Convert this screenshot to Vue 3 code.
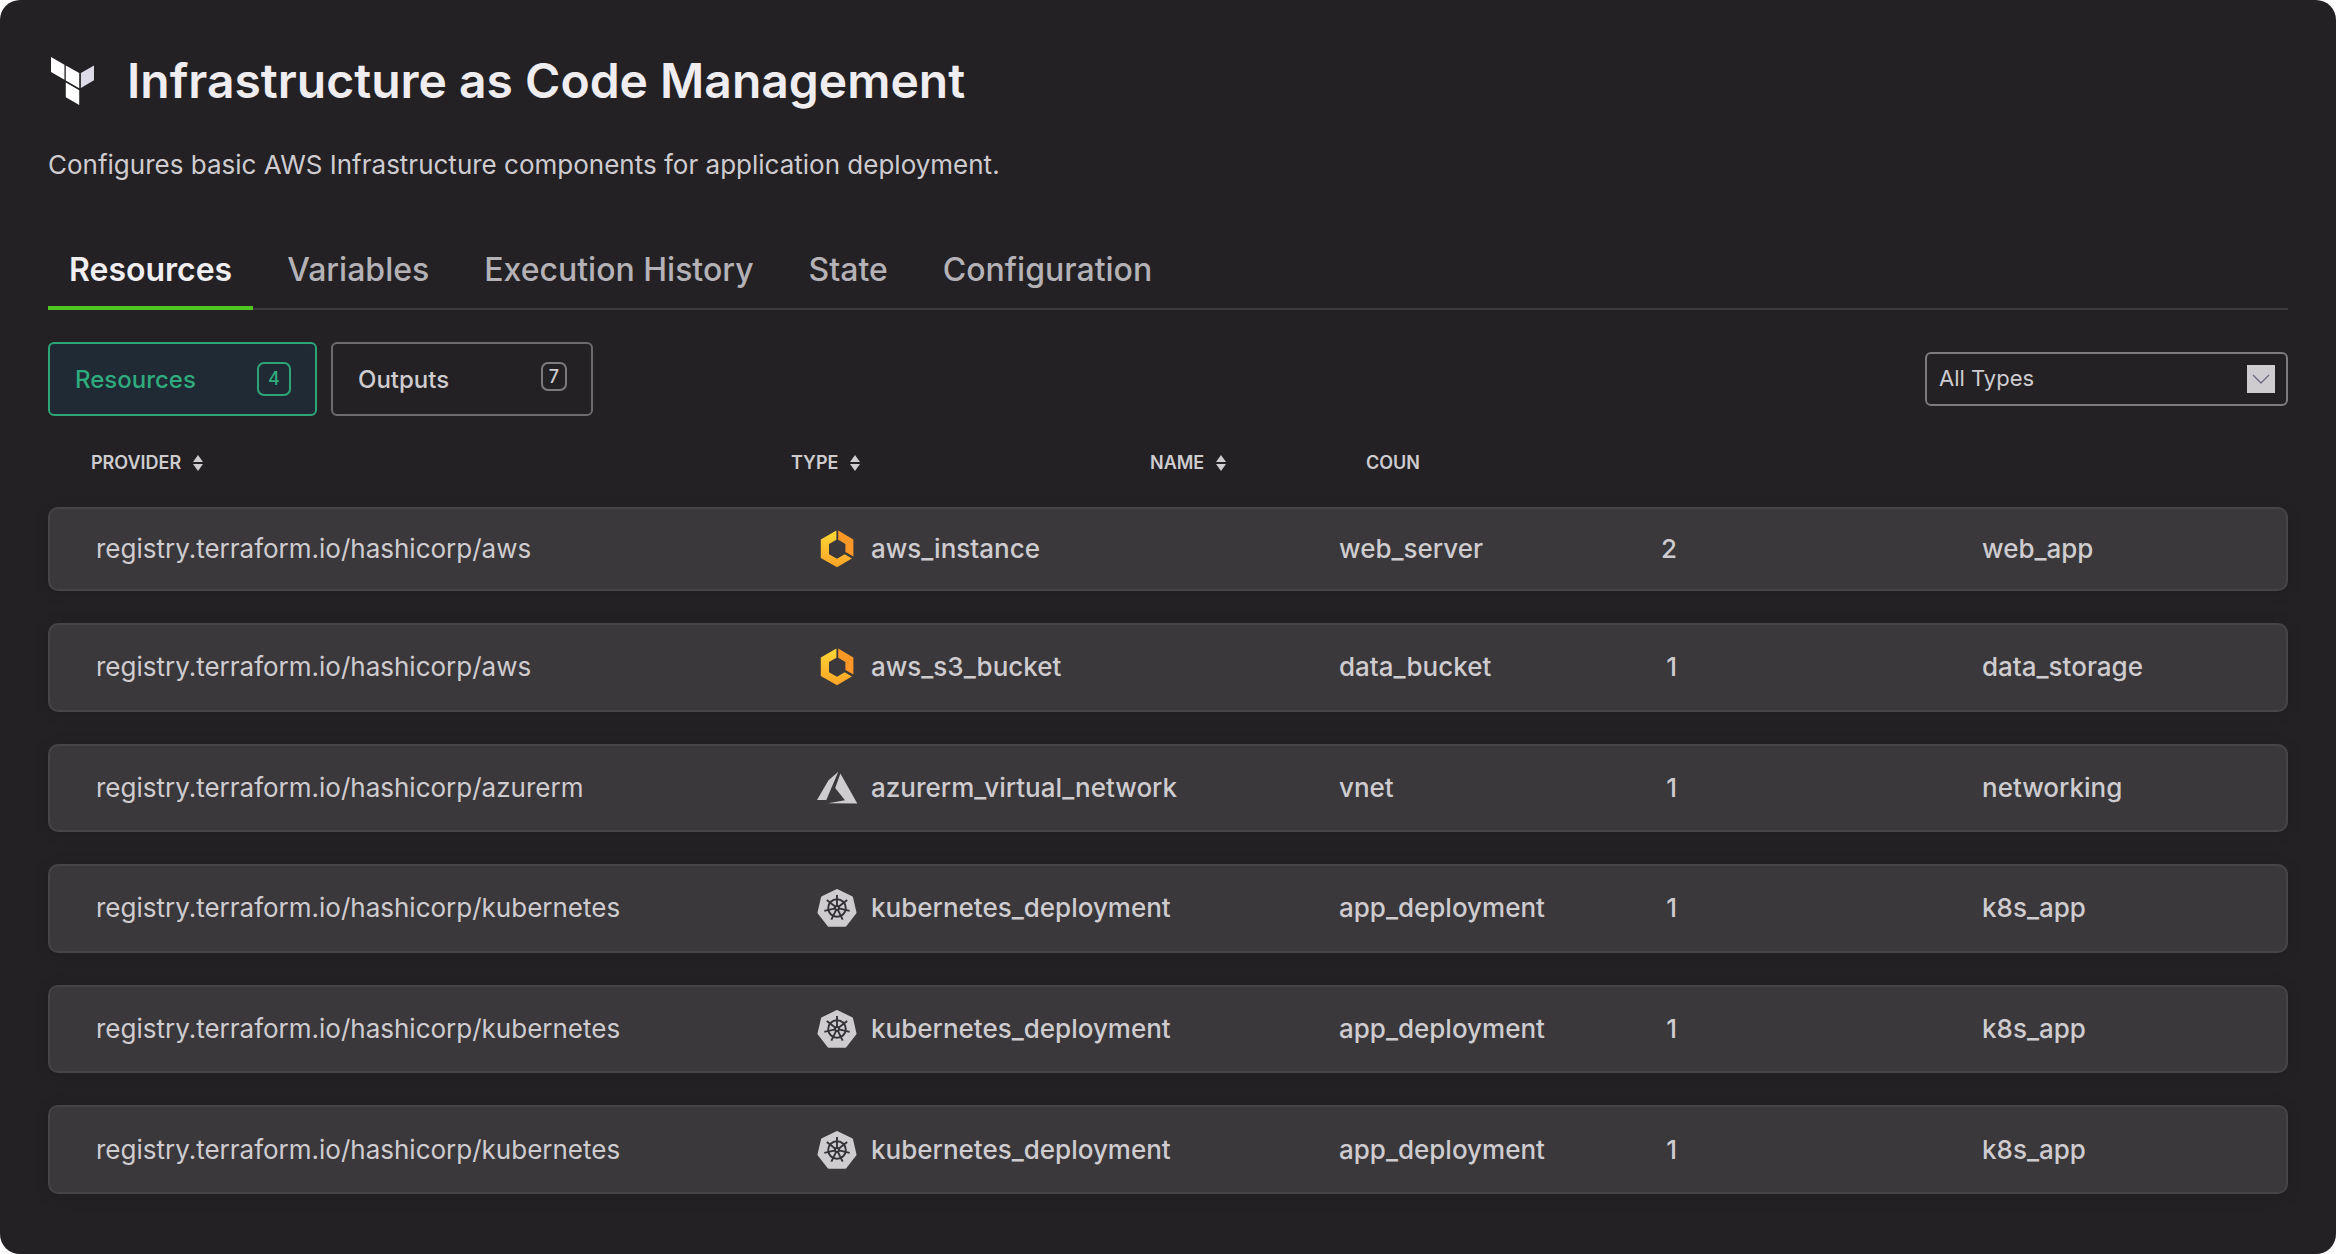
<script setup>
import { ref } from 'vue'

const tabs = ['Resources', 'Variables', 'Execution History', 'State', 'Configuration']
const activeTab = ref('Resources')
const filters = [
  { label: 'Resources', count: 4 },
  { label: 'Outputs', count: 7 },
]
const activeFilter = ref('Resources')
const selectedType = ref('All Types')

const registry = 'registry.terraform.io/hashicorp/'
const resources = [
  { provider: 'aws', type: 'aws_instance', name: 'web_server', count: 2, module: 'web_app' },
  { provider: 'aws', type: 'aws_s3_bucket', name: 'data_bucket', count: 1, module: 'data_storage' },
  { provider: 'azurerm', type: 'azurerm_virtual_network', name: 'vnet', count: 1, module: 'networking' },
  { provider: 'kubernetes', type: 'kubernetes_deployment', name: 'app_deployment', count: 1, module: 'k8s_app' },
  { provider: 'kubernetes', type: 'kubernetes_deployment', name: 'app_deployment', count: 1, module: 'k8s_app' },
  { provider: 'kubernetes', type: 'kubernetes_deployment', name: 'app_deployment', count: 1, module: 'k8s_app' },
]
const columns = [
  { label: 'PROVIDER', sortable: true },
  { label: 'TYPE', sortable: true },
  { label: 'NAME', sortable: true },
  { label: 'COUN', sortable: false },
]
const spokes = [0, 1, 2, 3, 4, 5, 6].map((i) => `rotate(${(i * 360) / 7} 20 20)`)
</script>

<template>
  <main class="panel">
    <header>
      <div class="title">
        <svg class="logo" viewBox="32 48 128 143" aria-hidden="true">
          <path fill="#fff" d="M32 48l40 23v45L32 93zM76 73l40 23v45l-40-23zM76 124l40 23v44l-40-23z" />
          <path fill="#dedbe8" d="M121 96l39-23v44l-39 23z" />
        </svg>
        <h1>Infrastructure as Code Management</h1>
      </div>
      <p class="subtitle">Configures basic AWS Infrastructure components for application deployment.</p>
    </header>

    <nav class="tabs">
      <button
        v-for="tab in tabs"
        :key="tab"
        type="button"
        class="tab"
        :class="{ active: tab === activeTab }"
        @click="activeTab = tab"
      >{{ tab }}</button>
    </nav>

    <div class="toolbar">
      <div class="filters">
        <button
          v-for="f in filters"
          :key="f.label"
          type="button"
          class="filter"
          :class="{ active: f.label === activeFilter }"
          @click="activeFilter = f.label"
        >
          <span>{{ f.label }}</span>
          <span class="badge">{{ f.count }}</span>
        </button>
      </div>
      <div class="select">
        <select v-model="selectedType" aria-label="Resource type">
          <option>All Types</option>
        </select>
        <svg class="arrow" viewBox="0 0 28 28" aria-hidden="true">
          <path fill="#cfccd0" d="M0 0h28v28H0z" />
          <path fill="none" stroke="#6f6b86" stroke-width="1.4" d="M6 10l8 8 8-8" />
        </svg>
      </div>
    </div>

    <table>
      <thead>
        <tr>
          <th v-for="c in columns" :key="c.label" scope="col">
            {{ c.label }}
            <svg v-if="c.sortable" class="sort" viewBox="0 0 10 16" aria-hidden="true">
              <path fill="currentColor" d="M5 0l5 7H0zM5 16l5-7H0z" />
            </svg>
          </th>
        </tr>
      </thead>
      <tbody>
        <tr v-for="(r, i) in resources" :key="i">
          <td class="provider">{{ registry + r.provider }}</td>
          <td class="type">
            <svg v-if="r.provider === 'aws'" class="icon" viewBox="0 0 40 40" aria-hidden="true">
              <defs>
                <linearGradient :id="'hex' + i" x1="0" y1="0" x2="0" y2="1">
                  <stop offset="0" stop-color="#fdd835" />
                  <stop offset="1" stop-color="#fca326" />
                </linearGradient>
              </defs>
              <path :fill="`url(#hex${i})`" d="M19.400 1.500v9.200L12 15v10.200l8 4.600 7.700-4.500 7.200 4.100L20 38.300 3.800 29V10.600z" />
              <path fill="#fb9727" d="M21.200 1.500l15.200 8.900v17.200l-8-4.600v-8l-7.200-4.200z" />
            </svg>
            <svg v-else-if="r.provider === 'azurerm'" class="icon" viewBox="0 0 40 40" aria-hidden="true">
              <path fill="#cfccd0" d="M21.300 3.800L11.500 12.200 0 32h9.300zM23.400 5.600L18.200 20 28 32.200 11 35.200 40.300 35.600z" />
            </svg>
            <svg v-else class="icon" viewBox="0 0 40 40" aria-hidden="true">
              <path fill="#cfccd0" stroke="#cfccd0" stroke-width="3" stroke-linejoin="round" d="M20 2.500L34.500 9.500 38 24.700 28.300 37.200H11.700L2 24.700 5.500 9.500z" />
              <g fill="none" stroke="#343236" stroke-width="1.900">
                <circle cx="20" cy="20" r="8.800" />
                <circle cx="20" cy="20" r="2" />
                <path v-for="s in spokes" :key="s" :transform="s" d="M20 18V7" />
              </g>
            </svg>
            <span>{{ r.type }}</span>
          </td>
          <td>{{ r.name }}</td>
          <td class="count">{{ r.count }}</td>
          <td>{{ r.module }}</td>
        </tr>
      </tbody>
    </table>
  </main>
</template>

<style>
body {
  background: #fff;
}
</style>

<style scoped>
.panel {
  box-sizing: border-box;
  min-height: 100vh;
  display: flex;
  flex-direction: column;
  padding: 49px 48px 60px;
  border-radius: 20px;
  background: #232124;
  color: #cfccd0;
  font-family: Inter, sans-serif;
}
button,
select {
  font-family: inherit;
  color: inherit;
  background: none;
  border: 0;
  padding: 0;
  margin: 0;
}
.title {
  display: flex;
  align-items: center;
  gap: 33px;
  height: 64px;
}
.logo {
  width: 43px;
  height: 48px;
  margin-left: 3px;
}
h1 {
  margin: 0;
  font-size: 48px;
  line-height: 64px;
  font-weight: 600;
  color: #efedf0;
}
.subtitle {
  margin: 35px 0 0;
  font-size: 26px;
  line-height: 34px;
  font-weight: 380;
}
.tabs {
  display: flex;
  gap: 13px;
  margin-top: 48px;
  box-shadow: inset 0 -2px #3c3a3d;
}
.tab {
  height: 80px;
  padding: 4px 21px 0;
  border-bottom: 4px solid transparent;
  font-size: 32px;
  line-height: 40px;
  font-weight: 500;
  color: #b5b2b7;
}
.tab.active {
  border-color: #4ec820;
  font-weight: 600;
  color: #f0eef1;
}
.toolbar {
  display: flex;
  justify-content: space-between;
  align-items: center;
  margin-top: 32px;
}
.filters {
  display: flex;
  gap: 14px;
}
.filter {
  box-sizing: border-box;
  width: 262px;
  height: 74px;
  padding: 0 24px 0 25px;
  display: flex;
  align-items: center;
  justify-content: space-between;
  border: 2px solid #6d6b6e;
  border-radius: 6px;
  font-size: 24px;
  font-weight: 500;
}
.badge {
  box-sizing: border-box;
  width: 26px;
  height: 29px;
  margin-bottom: 6px;
  border: 2px solid #7d7b7e;
  border-radius: 7px;
  font-size: 18px;
  line-height: 25px;
  text-align: center;
}
.filter.active {
  width: 269px;
  background: #1f2a34;
  border-color: #2ca577;
  color: #2fab7e;
}
.filter.active .badge {
  width: 34px;
  height: 34px;
  margin-bottom: 0;
  line-height: 30px;
  border-color: #2ca577;
}
.select {
  position: relative;
  width: 363px;
}
select {
  appearance: none;
  box-sizing: border-box;
  width: 100%;
  height: 54px;
  padding: 0 56px 2px 12px;
  border: 2px solid #7d7b7e;
  border-radius: 6px;
  font-size: 22px;
  font-weight: 380;
}
option {
  background: #232124;
}
.arrow {
  position: absolute;
  top: 13px;
  right: 13px;
  width: 28px;
  height: 28px;
  pointer-events: none;
}
table {
  flex: 1;
  display: flex;
  flex-direction: column;
}
thead tr {
  box-sizing: border-box;
  display: grid;
  grid-template-columns: 700fr 359fr 216fr 922fr;
  padding: 2px 0 0 43px;
  height: 91px;
  align-items: center;
}
thead {
  display: block;
}
th {
  display: flex;
  align-items: center;
  gap: 12px;
  padding: 0;
  font-size: 18px;
  line-height: 24px;
  font-weight: 600;
}
.sort {
  width: 10px;
  height: 16px;
}
tbody {
  flex: 1;
  display: grid;
  grid-template-rows: 84px repeat(5, 1fr);
  row-gap: 32px;
}
tbody tr {
  display: grid;
  grid-template-columns: 721fr 522fr 322fr 321fr 304fr;
  align-items: center;
  padding-left: 46px;
  border: 2px solid #464447;
  border-radius: 10px;
  background: #3a383b;
  box-shadow: 0 2px 16px rgba(0, 0, 0, 0.1);
}
td {
  padding: 0;
  font-size: 26px;
  line-height: 34px;
  font-weight: 500;
}
.provider {
  font-weight: 380;
}
.count {
  width: 16px;
  text-align: right;
}
.type {
  display: flex;
  align-items: center;
  gap: 14px;
}
.icon {
  width: 40px;
  height: 40px;
  overflow: visible;
}
</style>
